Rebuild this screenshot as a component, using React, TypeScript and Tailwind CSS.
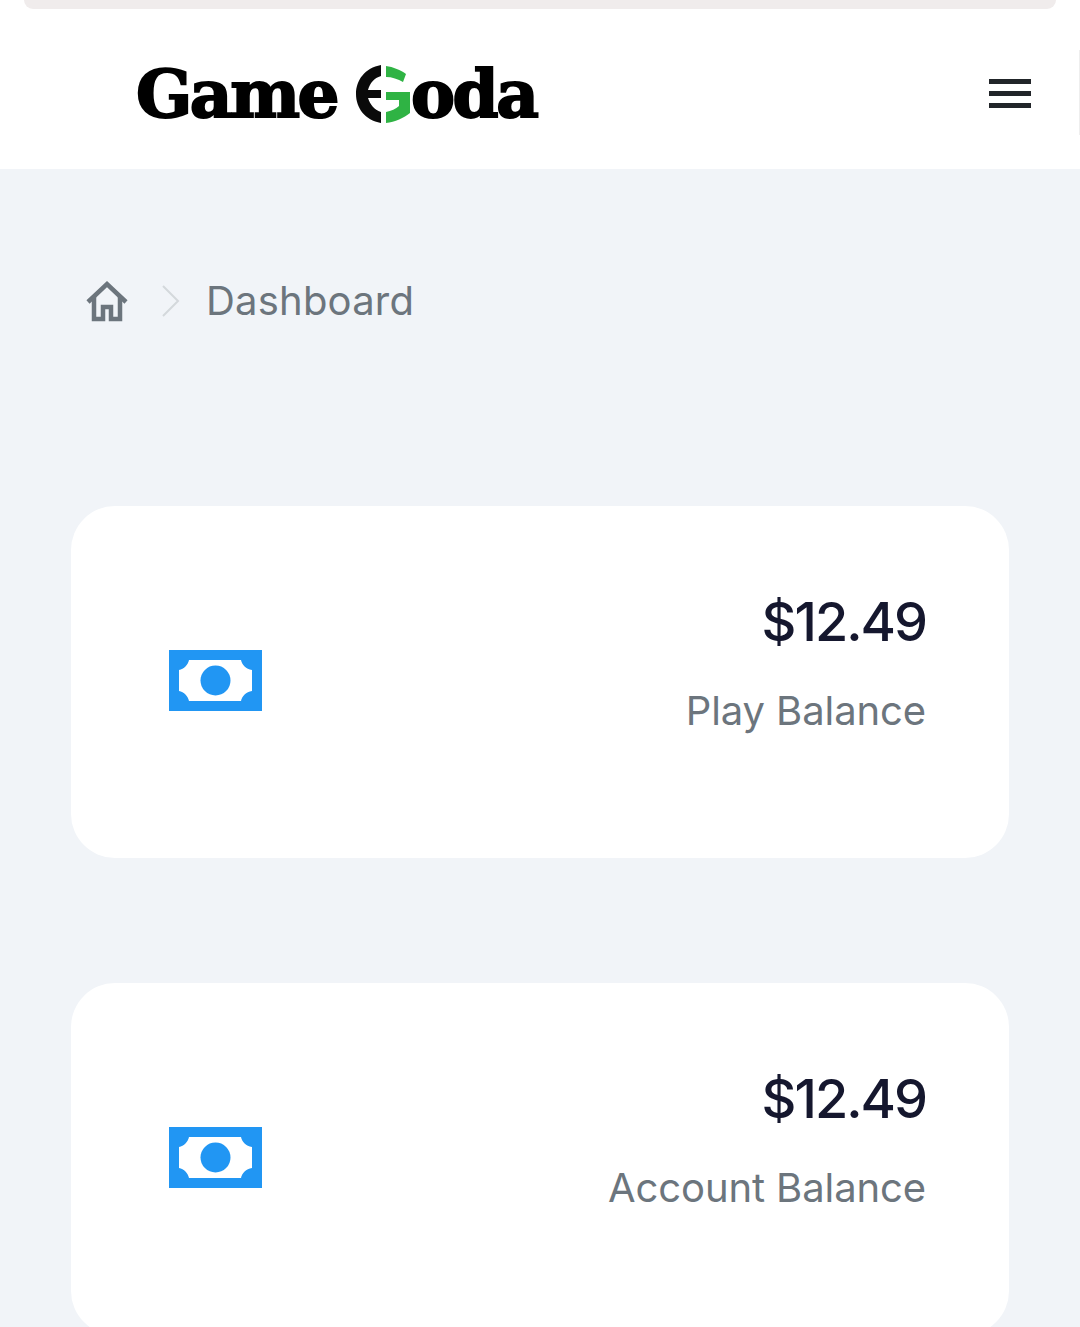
function MoneyIcon() {
  return (
    <svg width="93" height="61" viewBox="0 0 93 61" className="mb-[4px] shrink-0">
      <rect width="93" height="61" fill="#2196f3" />
      <path
        d="M20 10H72C73 15 77 19 83 20V41C77 42 73 46 72 51H20C19 46 15 42 10 41V20C15 19 19 15 20 10Z"
        fill="#fff"
      />
      <circle cx="46.5" cy="30.5" r="15" fill="#2196f3" />
    </svg>
  );
}

function LogoMark() {
  return (
    <svg width="56" height="58" viewBox="0 0 56 58" className="shrink-0">
      <path
        d="M26 0C10 3 1 15 1 29C1 43 10 55 26 58V47C19 45 15 39 13 33H26V25H13C15 18 19 13 26 11Z"
        fill="#0a0a0a"
      />
      <path d="M31 1C38 2 46 5 51 9L48 17C43 14 37 12 31 12Z" fill="#2fb344" />
      <path d="M31 27H55V48C49 53 40 57 31 58V47C36 46 41 44 44 41V35H31Z" fill="#2fb344" />
    </svg>
  );
}

function BalanceCard({ amount, label }: { amount: string; label: string }) {
  return (
    <div className="flex h-[352px] items-center justify-between rounded-[44px] bg-white pl-[98px] pr-[83px]">
      <MoneyIcon />
      <div className="flex flex-col items-end pb-[40px]">
        <div className="text-[54px] leading-[64px] font-medium tracking-[-2px] text-[#15172e]">{amount}</div>
        <div className="mt-[33px] text-[40px] leading-[48px] text-[#6c757d] tracking-[-0.1px]">{label}</div>
      </div>
    </div>
  );
}

export default function App() {
  return (
    <div className="relative h-[1327px] w-[1080px] overflow-hidden bg-[#f1f4f8] font-['Inter',sans-serif]">
      <header className="relative h-[169px] bg-white">
        <div className="mx-[24px] h-[9px] rounded-b-[16px] bg-[#f0ecec]" />
        <div className="flex h-[160px] items-center justify-between pl-[136px] pr-[49px] pt-[9px]">
          <div className="flex items-center font-['DejaVu_Serif',serif] text-[66px] leading-none font-bold tracking-[-2.5px] text-black [-webkit-text-stroke:2px_#000]">
            <span>Game</span>
            <span className="ml-[18px] flex">
              <LogoMark />
            </span>
            <span>oda</span>
          </div>
          <button className="flex w-[42px] flex-col gap-[7px]" aria-label="Menu">
            <span className="h-[5px] bg-[#212529]" />
            <span className="h-[5px] bg-[#212529]" />
            <span className="h-[5px] bg-[#212529]" />
          </button>
        </div>
        <div className="absolute right-0 top-[50px] h-[85px] w-px bg-[#eeeeee]" />
      </header>

      <main className="px-[71px]">
        <nav className="mt-[100px] flex h-[64px] items-center pl-[14px]">
          <svg width="44" height="44" viewBox="0 0 44 44" className="shrink-0 text-[#6c757d]" fill="none" stroke="currentColor" strokeWidth="4.5">
            <path d="M3 23L22 5L41 23" />
            <path d="M9 18V40H18V28H26V40H35V18" />
          </svg>
          <svg width="22" height="34" viewBox="0 0 22 34" className="ml-[31px] shrink-0" fill="none" stroke="#d4d8dc" strokeWidth="2">
            <path d="M3 2L18 17L3 32" />
          </svg>
          <span className="ml-[24px] text-[40px] tracking-[0.2px] text-[#6c757d]">Dashboard</span>
        </nav>

        <div className="mt-[173px] flex flex-col gap-[125px]">
          <BalanceCard amount="$12.49" label="Play Balance" />
          <BalanceCard amount="$12.49" label="Account Balance" />
        </div>
      </main>
    </div>
  );
}
